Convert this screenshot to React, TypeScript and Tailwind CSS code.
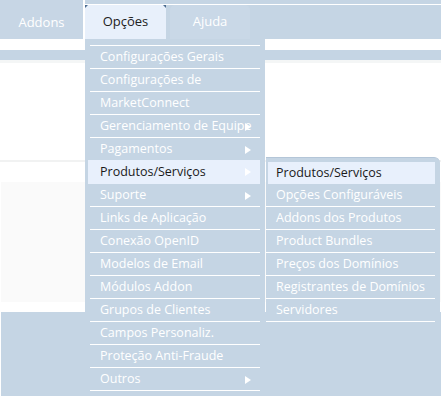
const menuItems = [
  { label: 'Configurações Gerais' },
  { label: 'Configurações de' },
  { label: 'MarketConnect' },
  { label: 'Gerenciamento de Equipe', sub: true },
  { label: 'Pagamentos', sub: true },
  { label: 'Produtos/Serviços', sub: true, active: true },
  { label: 'Suporte', sub: true },
  { label: 'Links de Aplicação' },
  { label: 'Conexão OpenID' },
  { label: 'Modelos de Email' },
  { label: 'Módulos Addon' },
  { label: 'Grupos de Clientes' },
  { label: 'Campos Personaliz.' },
  { label: 'Proteção Anti-Fraude' },
  { label: 'Outros', sub: true },
  { label: 'Notificações' },
];

const subItems = [
  'Produtos/Serviços',
  'Opções Configuráveis',
  'Addons dos Produtos',
  'Product Bundles',
  'Preços dos Domínios',
  'Registrantes de Domínios',
  'Servidores',
];

const Arrow = () => (
  <svg width="6" height="8" viewBox="0 0 6 8" className="absolute right-[9px] top-[8px]">
    <polygon points="0,0 6,4 0,8" fill="#ffffff" />
  </svg>
);

const App = () => {
  return (
    <div className="relative w-[441px] h-[396px] overflow-hidden bg-white font-['Open_Sans',sans-serif] text-[12.5px]">
      {/* top nav */}
      <nav className="flex h-[39px] bg-[#c5d5e4]">
        <div className="flex w-[83px] items-center justify-center rounded-tr-[4px] bg-[#c7d6e5] pt-[6px] text-[13px] text-white">
          Addons
        </div>
        <div className="w-[2px] bg-white" />
        <div className="flex flex-1 flex-col">
          <div className="h-[4px]" />
          <div className="h-px bg-white" />
          <div className="flex flex-1">
            <div className="relative flex w-[81px] items-center justify-center bg-[#e8f0fb] text-[13px] text-[#222]">
              <span className="absolute left-0 top-0 h-[3px] w-[3px] bg-[#4a6b8f] [clip-path:polygon(0_0,100%_0,0_100%)]" />
              <span className="absolute right-0 top-0 h-[3px] w-[3px] bg-[#4a6b8f] [clip-path:polygon(0_0,100%_0,100%_100%)]" />
              Opções
            </div>
            <div className="ml-[4px] flex w-[80px] items-center justify-center rounded-t-[5px] bg-[#c9d8e7] text-[13px] text-white">
              Ajuda
            </div>
          </div>
        </div>
      </nav>

      {/* page content behind the menu */}
      <div className="flex flex-col">
        <div className="h-[11px]" />
        <div className="h-[10px] bg-[#c5d5e4]" />
        <div className="h-[3px] bg-[#f4f6f6]" />
        <div className="h-[97px]" />
        <div className="h-[2px] bg-[#f1f2f2]" />
        <div className="h-[20px]" />
        <div className="ml-px h-[120px] bg-[#fafafa]" />
        <div className="h-[10px]" />
        <div className="ml-px h-[84px] bg-[#c5d5e4]" />
      </div>

      {/* dropdown */}
      <div className="absolute left-[85px] top-[39px] w-[180px] bg-[#c5d5e4] pt-[6px]">
        <ul className="border-t border-white mx-[5px]">
          {menuItems.map((item) => (
            <li
              key={item.label}
              className={
                item.active
                  ? 'relative -ml-[2px] -mt-px h-[24px] whitespace-nowrap bg-[#e8f0fc] pl-[12px] leading-[24px] text-[#1a1a1a]'
                  : 'relative h-[23px] overflow-hidden whitespace-nowrap border-b border-white pl-[10px] leading-[22px] text-white'
              }
            >
              {item.label}
              {item.sub && <Arrow />}
            </li>
          ))}
        </ul>
      </div>

      {/* submenu */}
      <div className="absolute left-[266px] top-[157px] w-[174px] rounded-tr-[6px] border-t border-[#b4c6d8] bg-[#c5d5e4] pt-[4px] pb-[4px]">
        <ul className="mr-[5px]">
          {subItems.map((label, i) => (
            <li
              key={label}
              className={
                i === 0
                  ? 'ml-[2px] h-[22px] whitespace-nowrap bg-[#e8f0fc] pl-[8px] leading-[22px] text-[#1a1a1a]'
                  : 'h-[23px] whitespace-nowrap border-b border-white pl-[10px] leading-[22px] text-white'
              }
            >
              {label}
            </li>
          ))}
        </ul>
      </div>
    </div>
  );
};

export default App;
